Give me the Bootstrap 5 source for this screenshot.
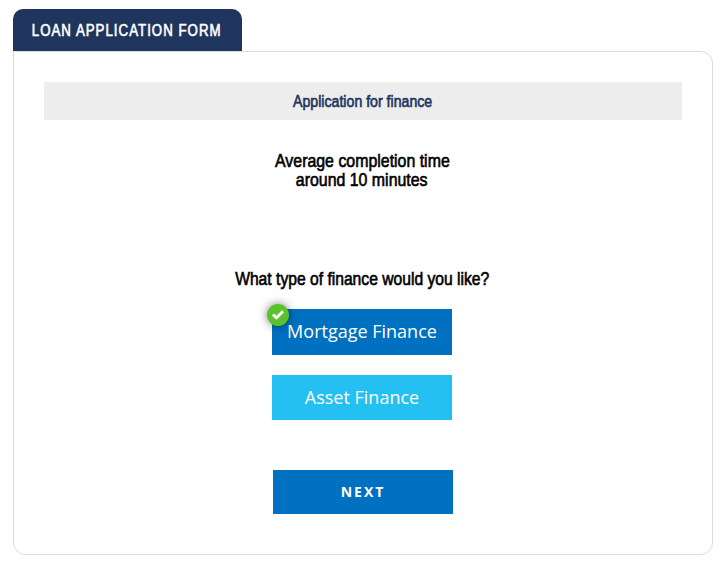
<!DOCTYPE html>
<html lang="en">
<head>
<meta charset="utf-8">
<meta name="viewport" content="width=device-width, initial-scale=1">
<title>Loan Application Form</title>
<link href="https://cdn.jsdelivr.net/npm/bootstrap@5.3.0/dist/css/bootstrap.min.css" rel="stylesheet">
<style>
  body { font-family: "Open Sans", sans-serif; color: #000; }
  .loan-page { width: 700px; margin-left: 13px; padding-top: 9px; }
  .form-tab { width: 229px; height: 42px; padding: 2px 2px 0 0; background: #20355d; border-radius: 10px 10px 0 0; font-size: 17px; letter-spacing: 1.3px; }
  .form-panel { height: 504px; border: 1px solid #dcdcdc; border-radius: 0 12px 12px 12px; padding: 30px; }
  .form-banner { height: 38px; padding-top: 1px; background: #ededed; color: #20355d; font-size: 17px; }
  .form-body { padding-right: 2px; }
  /* Condensed gothic lettering for headings */
  .gothic { font-family: "Liberation Sans", sans-serif; -webkit-text-stroke: .65px currentColor; white-space: nowrap; }
  .gothic span { display: block; transform: scaleX(.837); }
  .form-tab.gothic span { transform: scaleX(.78); }
  .form-banner.gothic span { transform: scaleX(.832); }
  .estimate { margin-top: 31px; font-size: 19px; line-height: 19px; }
  .question { margin-top: 80px; font-size: 19px; line-height: 20px; }
  .question.gothic span { transform: scaleX(.824); }
  .choice { width: 180px; height: 45px; border: 0; border-radius: 0; padding: 0; font-size: 18px; color: #fff; background: #25c0f2; }
  .choice:hover { color: #fff; background: #25c0f2; }
  .choice.chosen, .choice.chosen:hover { height: 46px; padding-bottom: 2px; background: #0070c0; }
  .tick { left: -5px; top: -5px; width: 22px; height: 22px; background: #5bc22b; box-shadow: 0 0 10px rgba(0,0,0,.5); }
  .next-btn, .next-btn:hover { width: 180px; height: 44px; margin: 50px 0 0 2px; border: 0; border-radius: 0; padding: 0 0 2px; background: #0070c0; color: #fff; font-size: 14px; font-weight: 700; letter-spacing: 2px; }
</style>
</head>
<body class="bg-white">
<main class="loan-page">
  <div class="form-tab gothic d-flex align-items-center justify-content-center text-white"><span>LOAN APPLICATION FORM</span></div>
  <section class="form-panel">
    <div class="form-banner gothic d-flex align-items-center justify-content-center"><span>Application for finance</span></div>
    <div class="form-body">
      <div class="estimate gothic d-flex flex-column align-items-center"><span>Average completion time</span><span>around 10 minutes</span></div>
      <div class="question gothic d-flex justify-content-center"><span>What type of finance would you like?</span></div>
      <div class="d-flex flex-column align-items-center pt-3 mt-1">
        <button type="button" class="btn choice chosen position-relative mb-3">Mortgage Finance
          <span class="tick position-absolute rounded-circle d-flex align-items-center justify-content-center">
            <svg width="14" height="12" viewBox="0 0 14 12" fill="none" stroke="#fff" stroke-width="3" stroke-linejoin="round"><path d="M2 5.5 L5.5 8.8 L12 2.3"/></svg>
          </span>
        </button>
        <button type="button" class="btn choice mt-1">Asset Finance</button>
        <button type="button" class="btn next-btn">NEXT</button>
      </div>
    </div>
  </section>
</main>
<script src="https://cdn.jsdelivr.net/npm/bootstrap@5.3.0/dist/js/bootstrap.bundle.min.js"></script>
</body>
</html>
